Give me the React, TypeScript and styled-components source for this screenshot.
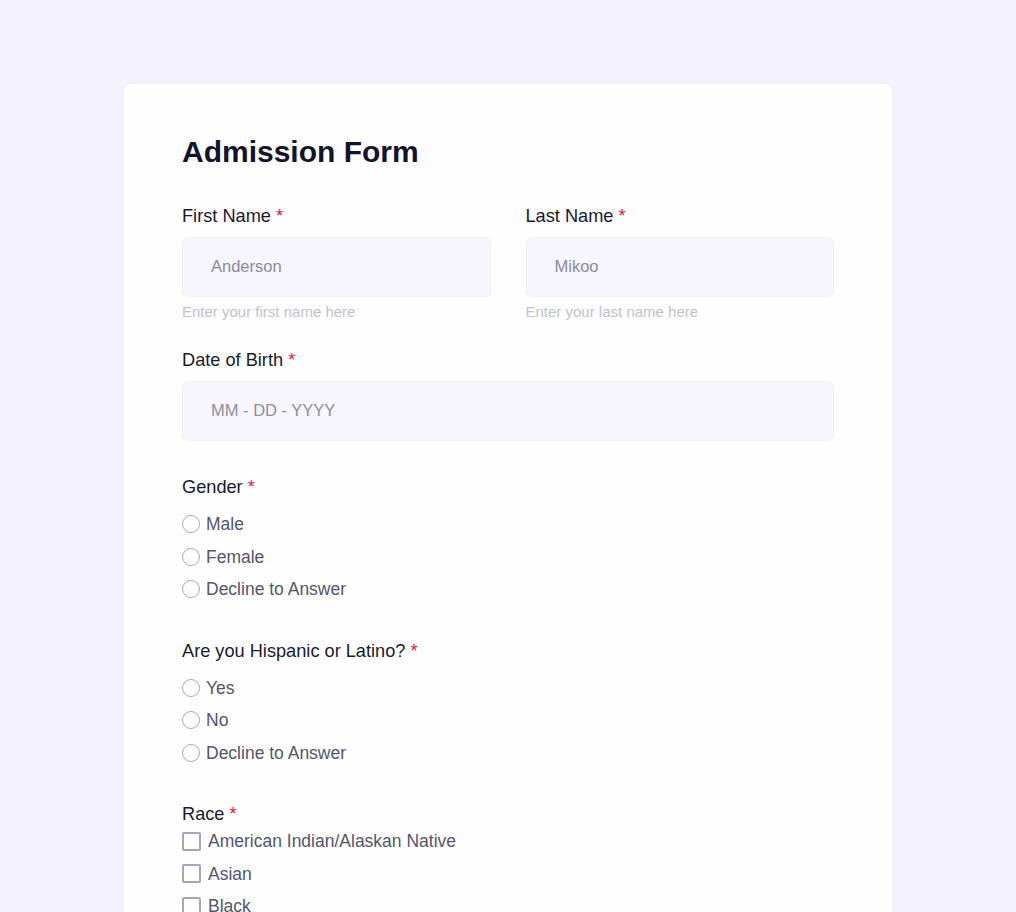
import { createGlobalStyle, styled } from "styled-components";

const genderOptions = ["Male", "Female", "Decline to Answer"];
const hispanicOptions = ["Yes", "No", "Decline to Answer"];
const raceOptions = [
  "American Indian/Alaskan Native",
  "Asian",
  "Black",
  "Native Hawaiian/Pacific Islander",
  "White",
  "Decline to Answer",
];

export default function App() {
  return (
    <>
      <GlobalStyle />
      <Page>
        <Card>
          <Title>Admission Form</Title>
          <NameRow>
            <Field>
              <Label>
                First Name <Star>*</Star>
              </Label>
              <Input defaultValue="Anderson" />
              <Helper>Enter your first name here</Helper>
            </Field>
            <Field>
              <Label>
                Last Name <Star>*</Star>
              </Label>
              <Input defaultValue="Mikoo" />
              <Helper>Enter your last name here</Helper>
            </Field>
          </NameRow>

          <Field $top={28}>
            <Label>
              Date of Birth <Star>*</Star>
            </Label>
            <Input placeholder="MM - DD - YYYY" />
          </Field>

          <Group $top={35}>
            <Label>
              Gender <Star>*</Star>
            </Label>
            <OptionList $top={10}>
              {genderOptions.map((o) => (
                <Option key={o}>
                  <Radio type="radio" name="gender" />
                  <OptionText>{o}</OptionText>
                </Option>
              ))}
            </OptionList>
          </Group>

          <Group $top={34}>
            <Label>
              Are you Hispanic or Latino? <Star>*</Star>
            </Label>
            <OptionList $top={10}>
              {hispanicOptions.map((o) => (
                <Option key={o}>
                  <Radio type="radio" name="hispanic" />
                  <OptionText>{o}</OptionText>
                </Option>
              ))}
            </OptionList>
          </Group>

          <Group $top={34}>
            <Label>
              Race <Star>*</Star>
            </Label>
            <OptionList $top={0}>
              {raceOptions.map((o) => (
                <Option key={o}>
                  <Check type="checkbox" />
                  <OptionText $box>{o}</OptionText>
                </Option>
              ))}
            </OptionList>
          </Group>
        </Card>
      </Page>
    </>
  );
}

const GlobalStyle = createGlobalStyle`
  * {
    box-sizing: border-box;
  }
  html, body {
    margin: 0;
    padding: 0;
    background: #f3f1fb;
    font-family: "Liberation Sans", Arial, sans-serif;
  }
`;

const Page = styled.main`
  min-height: 100vh;
  display: flex;
  justify-content: center;
  padding: 84px 0 60px;
  background: #f3f1fb;
`;

const Card = styled.section`
  width: 768px;
  background: #fefeff;
  border-radius: 8px;
  padding: 51px 58px 60px;
  display: flex;
  flex-direction: column;
`;

const Title = styled.h1`
  margin: 0;
  font-size: 30px;
  line-height: 34px;
  font-weight: 700;
  color: #13132b;
`;

const NameRow = styled.div`
  display: grid;
  grid-template-columns: 1fr 1fr;
  column-gap: 35px;
  margin-top: 36px;
`;

const Field = styled.div<{ $top?: number }>`
  display: flex;
  flex-direction: column;
  margin-top: ${(p) => p.$top ?? 0}px;
`;

const Group = styled.div<{ $top: number }>`
  display: flex;
  flex-direction: column;
  margin-top: ${(p) => p.$top}px;
`;

const Label = styled.label`
  font-size: 18.2px;
  line-height: 22px;
  color: #1a1a2e;
`;

const Star = styled.span`
  color: #e8173a;
`;

const Input = styled.input`
  margin-top: 10px;
  height: 60px;
  width: 100%;
  border: 1px solid #efeff6;
  border-radius: 6px;
  background: #f6f6fc;
  padding: 0 28px 2px;
  font-family: "Liberation Sans", Arial, sans-serif;
  font-size: 16.5px;
  color: #8b8b9b;
  outline: none;

  &::placeholder {
    color: #8f8f9e;
  }
`;

const Helper = styled.span`
  margin-top: 6px;
  font-size: 15px;
  line-height: 18px;
  color: #c2c2ca;
`;

const OptionList = styled.div<{ $top: number }>`
  display: flex;
  flex-direction: column;
  margin-top: ${(p) => p.$top}px;
`;

const Option = styled.label`
  display: flex;
  align-items: center;
  height: 32.5px;
  cursor: pointer;
`;

const Radio = styled.input`
  appearance: none;
  margin: 0;
  width: 18px;
  height: 18px;
  border: 1.5px solid #a7a7ba;
  border-radius: 50%;
  background: #fff;
  flex-shrink: 0;
`;

const Check = styled.input`
  appearance: none;
  margin: 0;
  width: 19px;
  height: 19px;
  border: 2px solid #a7a5be;
  border-radius: 2px;
  background: #fff;
  flex-shrink: 0;
`;

const OptionText = styled.span<{ $box?: boolean }>`
  margin-left: ${(p) => (p.$box ? 7 : 6)}px;
  font-size: 17.5px;
  line-height: 20px;
  color: #55556b;
`;
